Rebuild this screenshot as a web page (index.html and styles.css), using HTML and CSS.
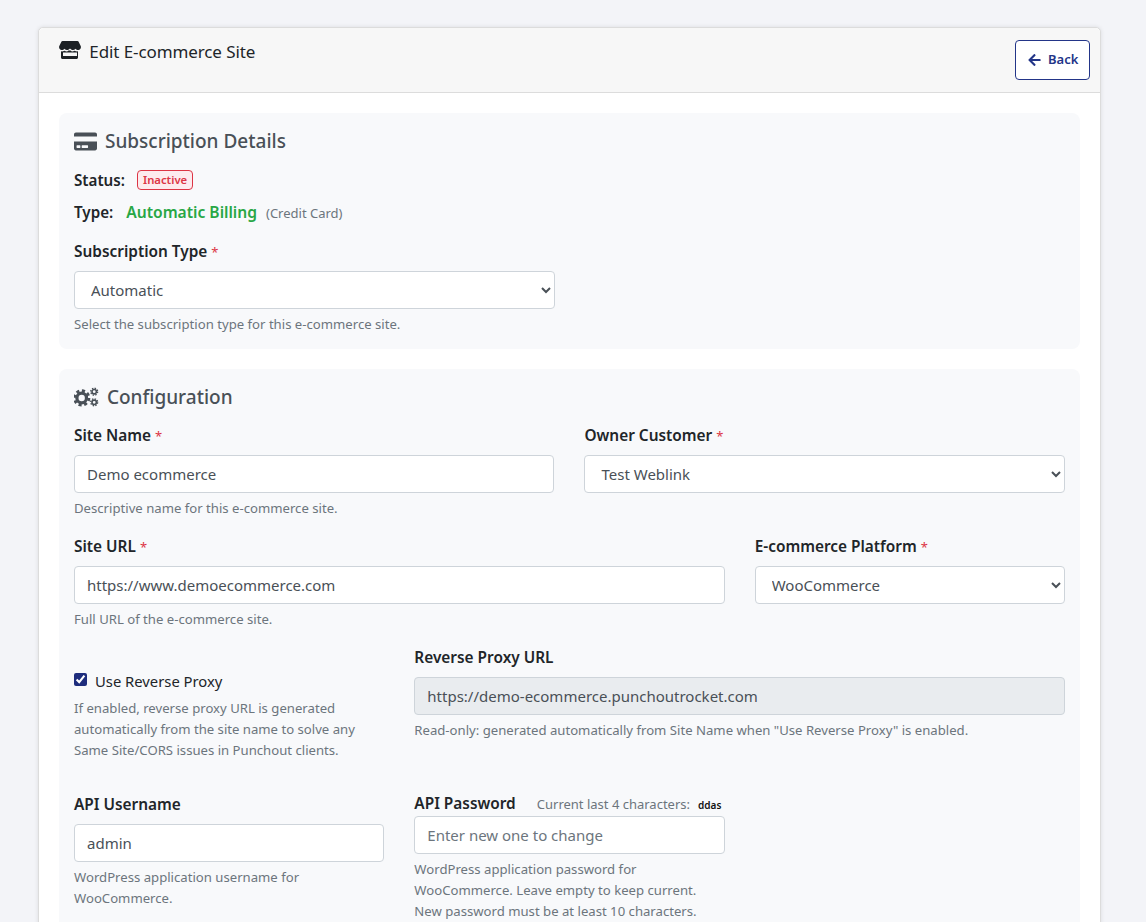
FILE: index.html
```html
<!DOCTYPE html>
<html lang="en">
<head>
    <meta charset="UTF-8">
    <meta name="viewport" content="width=device-width, initial-scale=1.0">
    <title>Edit E-commerce Site</title>
    <link rel="stylesheet" href="styles.css">
</head>
<body>
    <div class="card">
        <div class="card-header">
            <h1 class="page-title">
                <svg class="icon-store" viewBox="0 0 22 18"><path d="M3.500 0h15c.4 0 .8.2 1 .5l2.200 4.600c.7 1.700-.4 3.700-2.300 3.900-1.100.1-2.200-.4-2.900-1.200-.6.8-1.500 1.200-2.500 1.200S12 8.600 11.400 7.800c-.2-.1-.6-.1-.8 0C10 8.600 9 9 8 9s-1.900-.4-2.500-1.200C4.800 8.600 3.700 9.100 2.600 9 .7 8.800-.4 6.800.3 5.100L2.500.5c.2-.3.6-.5 1-.5z"/><path fill-rule="evenodd" d="M2 10.300c.9.2 2.100.1 3.500-.6 1.500 1 3 1 4-.1h2c1 1.100 2.500 1.100 4 .1 1.400.7 2.600.8 3.500.6V16.500c0 .8-.7 1.500-1.500 1.500h-14C2.700 18 2 17.300 2 16.500zM4 11.500v3.500h14v-3.500z"/></svg>
                Edit E-commerce Site
            </h1>
            <a class="btn-back" href="#">
                <svg class="icon-arrow" viewBox="0 0 448 512"><path d="M257.500 445.100l-22.200 22.200c-9.400 9.400-24.600 9.400-33.900 0L7 273c-9.400-9.400-9.400-24.600 0-33.900L201.400 44.700c9.400-9.400 24.600-9.400 33.900 0l22.200 22.200c9.500 9.500 9.300 25-.4 34.300L136.600 216H424c13.300 0 24 10.700 24 24v32c0 13.300-10.700 24-24 24H136.600l120.500 114.800c9.800 9.300 10 24.800.4 34.300z"/></svg>
                Back
            </a>
        </div>

        <div class="card-body">
            <section class="panel panel-subscription">
                <h2 class="panel-title">
                    <svg class="icon-card" viewBox="0 0 576 512"><path d="M0 432c0 26.500 21.500 48 48 48h480c26.500 0 48-21.500 48-48V256H0v176zm192-68c0-6.600 5.400-12 12-12h136c6.600 0 12 5.400 12 12v40c0 6.600-5.400 12-12 12H204c-6.600 0-12-5.400-12-12v-40zm-128 0c0-6.600 5.400-12 12-12h72c6.600 0 12 5.400 12 12v40c0 6.600-5.400 12-12 12H76c-6.600 0-12-5.400-12-12v-40zM576 80v48H0V80c0-26.500 21.500-48 48-48h480c26.500 0 48 21.500 48 48z"/></svg>
                    Subscription Details
                </h2>
                <div class="status-line"><strong>Status:</strong><span class="badge-inactive">Inactive</span></div>
                <div class="type-line"><strong>Type:</strong><span class="billing">Automatic Billing</span><span class="billing-note">(Credit Card)</span></div>
                <div class="grid">
                    <div class="col-6">
                        <label class="field-label">Subscription Type <span class="req">*</span></label>
                        <select class="control select-control"><option>Automatic</option></select>
                        <div class="help">Select the subscription type for this e-commerce site.</div>
                    </div>
                </div>
            </section>

            <section class="panel">
                <h2 class="panel-title panel-title-config">
                    <svg class="icon-cogs" viewBox="0 0 26 20">
                        <circle cx="8" cy="11" r="5" fill="none" stroke="currentColor" stroke-width="3.400"/>
                        <circle cx="8" cy="11" r="7.500" fill="none" stroke="currentColor" stroke-width="3" stroke-dasharray="3.200 2.690"/>
                        <circle cx="21" cy="4.500" r="2.300" fill="none" stroke="currentColor" stroke-width="1.700"/>
                        <circle cx="21" cy="4.500" r="3.600" fill="none" stroke="currentColor" stroke-width="1.400" stroke-dasharray="1.500 1.330"/>
                        <circle cx="21" cy="15.500" r="2.300" fill="none" stroke="currentColor" stroke-width="1.700"/>
                        <circle cx="21" cy="15.500" r="3.600" fill="none" stroke="currentColor" stroke-width="1.400" stroke-dasharray="1.500 1.330"/>
                    </svg>
                    Configuration
                </h2>
                <div class="grid grid-rows">
                    <div class="col-6">
                        <label class="field-label">Site Name <span class="req">*</span></label>
                        <input class="control" type="text" value="Demo ecommerce">
                        <div class="help">Descriptive name for this e-commerce site.</div>
                    </div>
                    <div class="col-6">
                        <label class="field-label">Owner Customer <span class="req">*</span></label>
                        <select class="control select-control"><option>Test Weblink</option></select>
                    </div>

                    <div class="col-8">
                        <label class="field-label">Site URL <span class="req">*</span></label>
                        <input class="control" type="text" value="https://www.demoecommerce.com">
                        <div class="help">Full URL of the e-commerce site.</div>
                    </div>
                    <div class="col-4">
                        <label class="field-label">E-commerce Platform <span class="req">*</span></label>
                        <select class="control select-control"><option>WooCommerce</option></select>
                    </div>

                    <div class="col-4 proxy-check">
                        <label class="check-label"><input class="check" type="checkbox" checked>Use Reverse Proxy</label>
                        <div class="help">If enabled, reverse proxy URL is generated automatically from the site name to solve any Same Site/CORS issues in Punchout clients.</div>
                    </div>
                    <div class="col-8">
                        <label class="field-label">Reverse Proxy URL</label>
                        <input class="control control-readonly" type="text" value="https://demo-ecommerce.punchoutrocket.com" readonly>
                        <div class="help">Read-only: generated automatically from Site Name when "Use Reverse Proxy" is enabled.</div>
                    </div>

                    <div class="col-4">
                        <label class="field-label">API Username</label>
                        <input class="control" type="text" value="admin">
                        <div class="help">WordPress application username for WooCommerce.</div>
                    </div>
                    <div class="col-4">
                        <div class="password-head">
                            <label class="field-label field-label-inline">API Password</label>
                            <span class="current-chars">Current last 4 characters:</span>
                            <span class="chars">ddas</span>
                        </div>
                        <input class="control" type="text" placeholder="Enter new one to change">
                        <div class="help">WordPress application password for WooCommerce. Leave empty to keep current. New password must be at least 10 characters.</div>
                    </div>
                </div>
            </section>
        </div>
    </div>
</body>
</html>
```

FILE: styles.css
```css
html, body {
    height: 922px;
    overflow: hidden;
}
body {
    box-sizing: border-box;
    margin: 0;
    padding: 27px 45px 0 38px;
    background-color: #f3f4f8;
    color: #212529;
    font-family: "Noto Sans", sans-serif;
    font-size: 15px;
    line-height: 1.5;
}
.card {
    background-color: #fff;
    border: 1px solid #dcdcdc;
    border-radius: 5px;
    box-shadow: 0 0 4px rgba(0, 0, 0, 0.1);
}
.card-header {
    display: flex;
    justify-content: space-between;
    box-sizing: border-box;
    height: 65px;
    padding: 12px 10px 0 20px;
    background-color: #f7f7f7;
    border-bottom: 1px solid #dcdcdc;
    border-radius: 5px 5px 0 0;
}
.page-title {
    margin: 0;
    font-size: 17px;
    font-weight: 400;
    line-height: 24px;
    color: #212529;
    letter-spacing: -0.1px;
}
.icon-store {
    width: 22px;
    height: 18px;
    margin-right: 4px;
    vertical-align: -1px;
    fill: #1d2125;
}
.btn-back {
    display: flex;
    align-items: center;
    gap: 7px;
    box-sizing: border-box;
    width: 75px;
    height: 40px;
    padding-left: 12px;
    background-color: #fff;
    border: 1px solid #233588;
    border-radius: 4px;
    color: #233588;
    font-size: 13px;
    font-weight: 600;
    text-decoration: none;
}
.icon-arrow {
    width: 13px;
    height: 14px;
    fill: #233588;
}
.card-body {
    padding: 20px;
}
.panel {
    margin-bottom: 20px;
    padding: 15px;
    background-color: #f8f9fb;
    border-radius: 8px;
}
.panel-subscription {
    padding-bottom: 14px;
}
.panel-title {
    margin: 0 0 15px;
    font-size: 19px;
    font-weight: 500;
    line-height: 26px;
    color: #495057;
}
.panel-title-config {
    margin-bottom: 13px;
}
.icon-card {
    width: 23px;
    height: 21px;
    margin-right: 3px;
    vertical-align: -4px;
    fill: #495057;
}
.icon-cogs {
    width: 25px;
    height: 20px;
    margin-right: 3px;
    vertical-align: -3px;
    color: #495057;
}
.status-line, .type-line {
    display: flex;
    gap: 12px;
    height: 22px;
    font-size: 15.200px;
    line-height: 22px;
}
.status-line {
    align-items: center;
    margin-bottom: 10px;
}
.type-line {
    align-items: baseline;
    gap: 13px;
    margin-bottom: 16px;
}
strong {
    font-weight: 600;
    color: #212529;
}
.badge-inactive {
    padding: 0 5px;
    background-color: #fdebee;
    border: 1px solid #dc3545;
    border-radius: 4px;
    color: #dc3545;
    font-size: 11.300px;
    font-weight: 600;
    line-height: 18px;
}
.billing {
    color: #28a745;
    font-size: 15.600px;
    font-weight: 600;
}
.billing-note {
    margin-left: -4px;
    color: #6c757d;
    font-size: 13px;
}
.grid {
    display: grid;
    grid-template-columns: repeat(12, 1fr);
    column-gap: 30px;
}
.grid-rows {
    row-gap: 15px;
}
.col-4 { grid-column: span 4; }
.col-6 { grid-column: span 6; }
.col-8 { grid-column: span 8; }
.field-label {
    display: block;
    margin-bottom: 7px;
    padding-top: 1px;
    font-size: 15.400px;
    font-weight: 600;
    line-height: 24px;
}
.req {
    color: #dc3545;
    font-size: 13px;
    font-weight: 400;
}
.control {
    display: block;
    box-sizing: border-box;
    width: 100%;
    height: 38px;
    padding: 6px 12px;
    background-color: #fff;
    border: 1px solid #ced4da;
    border-radius: 4px;
    color: #495057;
    font-family: "Noto Sans", sans-serif;
    font-size: 15px;
}
.control::placeholder {
    color: #6c757d;
}
.control-readonly {
    background-color: #e9ecef;
}
.help {
    margin-top: 5px;
    color: #6c757d;
    font-size: 13.150px;
    line-height: 21px;
}
.proxy-check {
    padding: 24px 0 16px;
}
.check-label {
    display: flex;
    align-items: center;
    font-size: 14.800px;
    line-height: 24px;
}
.check {
    width: 13px;
    height: 13px;
    margin: 0 8px 3px 0;
    accent-color: #1e2d7d;
}
.password-head {
    display: flex;
    align-items: baseline;
    height: 24px;
}
.field-label-inline {
    margin: 0 21px 0 0;
    padding-top: 0;
}
.current-chars {
    color: #6c757d;
    font-size: 13px;
}
.chars {
    margin-left: 8px;
    color: #111;
    font-size: 10px;
    font-weight: 600;
}
```
